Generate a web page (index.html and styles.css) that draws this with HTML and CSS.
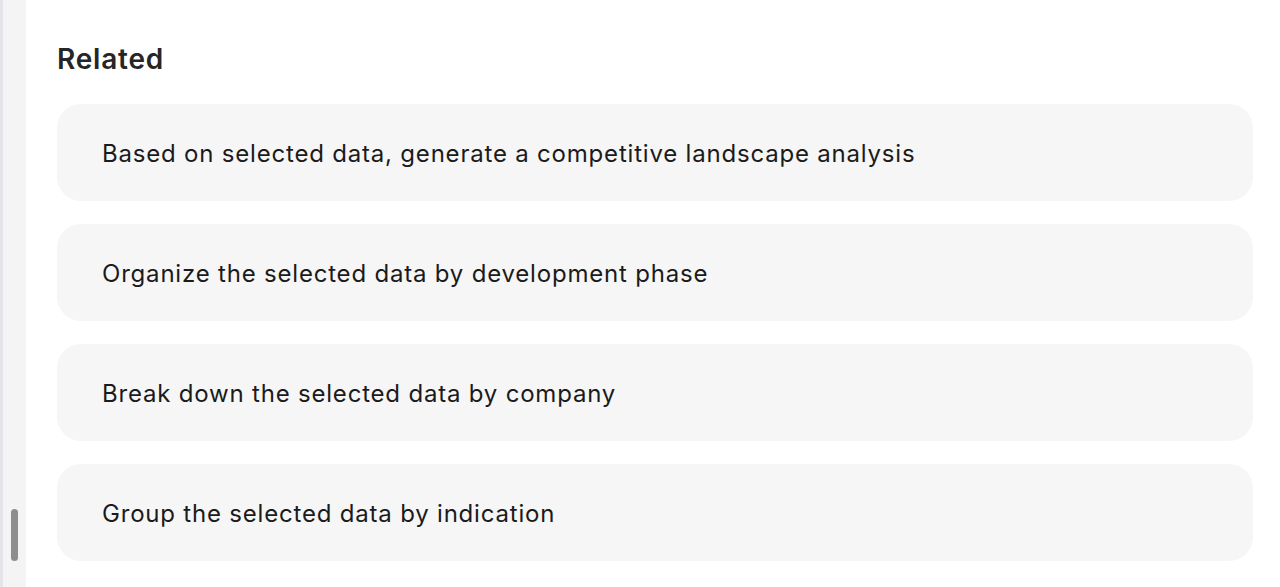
FILE: index.html
```html
<!DOCTYPE html>
<html>
<head>
<meta charset="utf-8">
<link rel="stylesheet" href="styles.css">
</head>
<body>
<div class="page">
  <aside class="rail">
    <div class="rail-edge"></div>
    <div class="rail-track"><div class="thumb"></div></div>
  </aside>
  <main class="content">
    <h2 class="title">Related</h2>
    <div class="list">
      <div class="card">Based on selected data, generate a competitive landscape analysis</div>
      <div class="card">Organize the selected data by development phase</div>
      <div class="card">Break down the selected data by company</div>
      <div class="card">Group the selected data by indication</div>
    </div>
  </main>
</div>
</body>
</html>
```
FILE: styles.css
```css
html, body {
  margin: 0;
  padding: 0;
  background: #ffffff;
  font-family: Inter, "Noto Sans", sans-serif;
  color: #1b1b1b;
}
.page {
  display: flex;
  height: 587px;
  overflow: hidden;
}
.rail {
  display: flex;
  width: 26px;
  flex: none;
}
.rail-edge {
  width: 3px;
  background: #e3e5e8;
}
.rail-track {
  flex: 1;
  background: #f4f4f5;
  display: flex;
  flex-direction: column;
  justify-content: flex-end;
  align-items: flex-start;
  padding: 0 0 26px 8px;
}
.thumb {
  width: 7px;
  height: 52px;
  border-radius: 4px;
  background: #8e8e8e;
}
.content {
  flex: 1;
  padding: 40px 27px 0 31px;
}
.title {
  margin: 0 0 26px;
  font-size: 28px;
  font-weight: 600;
  letter-spacing: 0.8px;
  color: #262626;
  line-height: 38px;
}
.list {
  display: flex;
  flex-direction: column;
  gap: 23px;
}
.card {
  background: #f6f6f6;
  border-radius: 24px;
  height: 97px;
  box-sizing: border-box;
  display: flex;
  align-items: center;
  padding: 2px 45px 0;
  font-size: 24px;
  letter-spacing: 0.8px;
  color: #1b1b1b;
}
```
